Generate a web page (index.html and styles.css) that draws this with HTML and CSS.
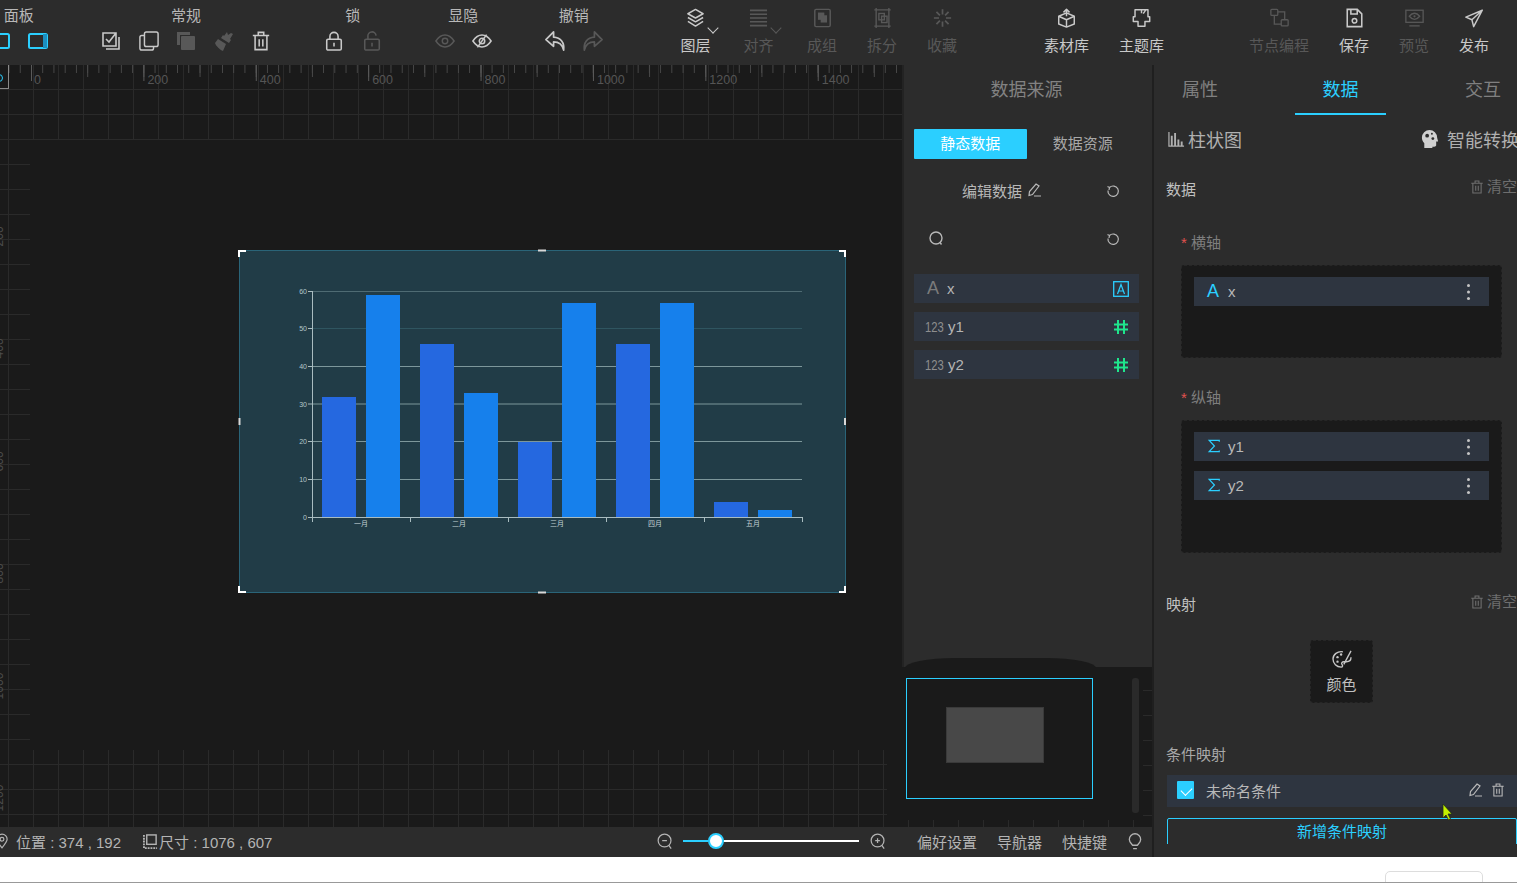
FILE: index.html
```html
<!DOCTYPE html>
<html lang="zh-CN">
<head>
<meta charset="utf-8">
<title>数据大屏编辑器</title>
<link rel="stylesheet" href="styles.css">
</head>
<body>
<svg class="sprite" xmlns="http://www.w3.org/2000/svg">
  <symbol id="i-panel-r" viewBox="0 0 20 16"><rect x="1" y="1" width="18" height="14" rx="1.5" fill="none" stroke="currentColor" stroke-width="2"/><rect x="15" y="1" width="4" height="14" fill="#1c8fc0"/></symbol>
  <symbol id="i-panel-l" viewBox="0 0 20 16"><rect x="1" y="1" width="18" height="14" rx="1.5" fill="none" stroke="currentColor" stroke-width="2"/></symbol>
  <symbol id="i-check" viewBox="0 0 20 20"><path d="M2 2h13v13H2zM5 8l3 3 7-9M18 6v12H5" fill="none" stroke="currentColor" stroke-width="1.6"/></symbol>
  <symbol id="i-copy" viewBox="0 0 22 22"><rect x="6" y="1" width="15" height="16" rx="2" fill="none" stroke="currentColor" stroke-width="1.6"/><path d="M6 5H3a2 2 0 0 0-2 2v12a2 2 0 0 0 2 2h11a2 2 0 0 0 2-2v-2" fill="none" stroke="currentColor" stroke-width="1.6"/></symbol>
  <symbol id="i-group" viewBox="0 0 20 20"><path d="M1 1h13v3H4v10H1z" fill="currentColor"/><rect x="5" y="5" width="14" height="14" rx="1" fill="currentColor"/></symbol>
  <symbol id="i-brush" viewBox="0 0 20 20"><path d="M13 1l1 3 3-2 2 1-3 5 1 1-2 3-8-5 2-3 1 1zM4 8l8 5-3 7c-3-1-7-5-8-8z" fill="currentColor"/></symbol>
  <symbol id="i-trash" viewBox="0 0 20 22"><path d="M1 5h18M7 5V1.5h6V5M3.5 5v15.5h13V5M8 9v8M12 9v8" fill="none" stroke="currentColor" stroke-width="1.7"/></symbol>
  <symbol id="i-lock" viewBox="0 0 20 22"><rect x="2" y="9" width="16" height="12" rx="1.5" fill="none" stroke="currentColor" stroke-width="1.7"/><path d="M5.500 9V6a4.500 4.500 0 0 1 9 0v3M10 13v4" fill="none" stroke="currentColor" stroke-width="1.7"/></symbol>
  <symbol id="i-unlock" viewBox="0 0 20 22"><rect x="2" y="9" width="16" height="12" rx="1.5" fill="none" stroke="currentColor" stroke-width="1.7"/><path d="M5.500 9V6a4.500 4.500 0 0 1 9-1M10 13v4" fill="none" stroke="currentColor" stroke-width="1.7"/></symbol>
  <symbol id="i-eye" viewBox="0 0 22 16"><path d="M1 8c3-4.500 6-6.500 10-6.500S18 3.500 21 8c-3 4.500-6 6.500-10 6.500S4 12.500 1 8z" fill="none" stroke="currentColor" stroke-width="1.6"/><circle cx="11" cy="8" r="3" fill="none" stroke="currentColor" stroke-width="1.6"/></symbol>
  <symbol id="i-eyeoff" viewBox="0 0 22 16"><path d="M1 8c3-4.500 6-6.500 10-6.500S18 3.500 21 8c-3 4.500-6 6.500-10 6.500S4 12.500 1 8z" fill="none" stroke="currentColor" stroke-width="1.7"/><circle cx="11" cy="8" r="3" fill="none" stroke="currentColor" stroke-width="1.7"/><path d="M16 1L6 15" stroke="currentColor" stroke-width="1.7"/></symbol>
  <symbol id="i-undo" viewBox="0 0 24 24"><path d="M10 2L2 10l8 7v-4.500c5 0 9 2 10.500 8.500 1-8-3-13-10.500-13.500z" fill="none" stroke="currentColor" stroke-width="1.8" stroke-linejoin="round"/></symbol>
  <symbol id="i-redo" viewBox="0 0 24 24"><path d="M14 2l8 8-8 7v-4.500c-5 0-9 2-10.500 8.500-1-8 3-13 10.500-13.500z" fill="none" stroke="currentColor" stroke-width="1.8" stroke-linejoin="round"/></symbol>
  <symbol id="i-layers" viewBox="0 0 20 20"><path d="M10 1l8 4.500-8 4.500-8-4.500zM2 9.500l8 4.500 8-4.500M2 13.500l8 5 8-5" fill="none" stroke="currentColor" stroke-width="1.6" stroke-linejoin="round"/></symbol>
  <symbol id="i-align" viewBox="0 0 20 20"><path d="M1 2h18M1 6h18M1 10h18M1 14h18M1 18h18" stroke="currentColor" stroke-width="1.7"/></symbol>
  <symbol id="i-combine" viewBox="0 0 20 22"><rect x="1.500" y="1.500" width="17" height="19" rx="1.500" fill="none" stroke="currentColor" stroke-width="1.600"/><rect x="5" y="5" width="7" height="8" fill="currentColor"/><rect x="8" y="8" width="7" height="8" fill="currentColor"/></symbol>
  <symbol id="i-split" viewBox="0 0 20 22"><path d="M1 2h18M1 20h18M3 0v22M17 0v22" stroke="currentColor" stroke-width="1.500"/><rect x="6" y="6" width="6" height="7" fill="none" stroke="currentColor" stroke-width="1.500"/><rect x="9" y="9" width="6" height="7" fill="none" stroke="currentColor" stroke-width="1.500"/></symbol>
  <symbol id="i-spin" viewBox="0 0 22 22"><path d="M11 1v6M11 15v6M1 11h6M15 11h6M4 4l4 4M14 14l4 4M18 4l-4 4M8 14l-4 4" stroke="currentColor" stroke-width="2"/></symbol>
  <symbol id="i-box" viewBox="0 0 22 22"><path d="M2 9l9-4 9 4v9l-9 3.500L2 18zM2 9l9 4 9-4M11 13v8.500M11 9V1.500M7.500 4.500L11 1l3.500 3.500" fill="none" stroke="currentColor" stroke-width="1.700" stroke-linejoin="round"/></symbol>
  <symbol id="i-theme" viewBox="0 0 22 22"><path d="M3.500 1.500h15v8h2v5.500H15v5.500H7V15H1.500V9.500h2zM11 1.500v4M16 1.500L13 6" fill="none" stroke="currentColor" stroke-width="1.700" stroke-linejoin="round"/></symbol>
  <symbol id="i-node" viewBox="0 0 22 22"><rect x="1" y="1" width="8" height="7" rx="1" fill="none" stroke="currentColor" stroke-width="1.500"/><rect x="13" y="13" width="8" height="7" rx="1" fill="none" stroke="currentColor" stroke-width="1.500"/><path d="M9 4h8v9M5 8v10h8" fill="none" stroke="currentColor" stroke-width="1.500"/></symbol>
  <symbol id="i-save" viewBox="0 0 20 22"><path d="M2 1.500h11l5 5v14H2zM6 1.500v5h7v-5" fill="none" stroke="currentColor" stroke-width="1.700"/><circle cx="10" cy="14" r="2.500" fill="none" stroke="currentColor" stroke-width="1.700"/></symbol>
  <symbol id="i-preview" viewBox="0 0 22 22"><rect x="1" y="2" width="20" height="14" fill="none" stroke="currentColor" stroke-width="1.500"/><path d="M5 20h12M5 9c2-2.500 4-3.500 6-3.500S15 6.500 17 9c-2 2.500-4 3.500-6 3.500S7 11.500 5 9z" fill="none" stroke="currentColor" stroke-width="1.500"/><circle cx="11" cy="9" r="1.300" fill="currentColor"/></symbol>
  <symbol id="i-send" viewBox="0 0 22 22"><path d="M20 2L1 10l7 3 2 8zM20 2L8 13" fill="none" stroke="currentColor" stroke-width="1.700" stroke-linejoin="round"/></symbol>
  <symbol id="i-pencil" viewBox="0 0 14 14"><path d="M9 1l3 2-6.500 8.500L2 12.500l.5-4zM7 13h7" fill="none" stroke="currentColor" stroke-width="1.200"/></symbol>
  <symbol id="i-refresh" viewBox="0 0 14 14"><path d="M3.500 2.500a5.200 5.200 0 1 1-1.500 3M1.500 1.500l2 1-.5 2.500" fill="none" stroke="currentColor" stroke-width="1.200"/></symbol>
  <symbol id="i-search" viewBox="0 0 16 16"><circle cx="8" cy="8" r="6" fill="none" stroke="currentColor" stroke-width="1.400"/><path d="M12 12.500l1.500 2" stroke="currentColor" stroke-width="1.400"/></symbol>
  <symbol id="i-hash" viewBox="0 0 16 16"><path d="M5 1v14M11 1v14M1 5.500h14M1 10.500h14" stroke="currentColor" stroke-width="2"/></symbol>
  <symbol id="i-abox" viewBox="0 0 16 16"><rect x=".7" y=".7" width="14.600" height="14.600" fill="none" stroke="currentColor" stroke-width="1.300"/><path d="M4.500 13L8 3.500l3.500 9.500M5.500 10h5" fill="none" stroke="currentColor" stroke-width="1.200"/></symbol>
  <symbol id="i-sigma" viewBox="0 0 14 16"><path d="M13 3V1.500H1.500L7.500 8l-6 6.500H13V13" fill="none" stroke="currentColor" stroke-width="1.400"/></symbol>
  <symbol id="i-bars" viewBox="0 0 18 16"><path d="M1 0v15h16" fill="none" stroke="currentColor" stroke-width="1.300"/><path d="M4 4v11M7.500 1v14M11 8v7M14.500 10v5" stroke="currentColor" stroke-width="2"/></symbol>
  <symbol id="i-brain" viewBox="0 0 18 20"><path d="M3 19v-5C1 12 .5 10 .5 8a8 8 0 0 1 16 0c0 1 1 3 1 4h-2v4c0 1-1 1.500-2 1.500h-2V19z" fill="currentColor"/><circle cx="6" cy="6" r="2" fill="#2c2c2c"/><circle cx="12" cy="9" r="1.500" fill="#2c2c2c"/><circle cx="11" cy="4" r="1" fill="#2c2c2c"/></symbol>
  <symbol id="i-palette" viewBox="0 0 22 20"><path d="M12 2C6 1 1 5 1 10c0 5 4 9 9 9 2 0 2-2 1-3s0-3 2-3h3c3 0 5-2 5-5" fill="none" stroke="currentColor" stroke-width="1.500"/><path d="M21 1l-8 15" stroke="currentColor" stroke-width="1.500"/><circle cx="6" cy="8" r="1.300" fill="currentColor"/><circle cx="10" cy="5" r="1.300" fill="currentColor"/><circle cx="6" cy="13" r="1.300" fill="currentColor"/></symbol>
  <symbol id="i-pin" viewBox="0 0 14 18"><path d="M7 17C3 12 1 9 1 7a6 6 0 0 1 12 0c0 2-2 5-6 10z" fill="none" stroke="currentColor" stroke-width="1.400"/><circle cx="7" cy="7" r="2.200" fill="none" stroke="currentColor" stroke-width="1.400"/></symbol>
  <symbol id="i-size" viewBox="0 0 16 16"><path d="M1 1v14h14" fill="none" stroke="currentColor" stroke-width="2" stroke-dasharray="2 1"/><rect x="4" y="1" width="10" height="10" fill="none" stroke="currentColor" stroke-width="1.500"/></symbol>
  <symbol id="i-zoomout" viewBox="0 0 18 18"><circle cx="8" cy="8" r="6.800" fill="none" stroke="currentColor" stroke-width="1.300"/><path d="M5.500 8h5M12.500 13l2.500 3.500" fill="none" stroke="currentColor" stroke-width="1.300"/></symbol>
  <symbol id="i-zoomin" viewBox="0 0 18 18"><circle cx="8" cy="8" r="6.800" fill="none" stroke="currentColor" stroke-width="1.300"/><path d="M5.500 8h5M8 5.500v5M12.500 13l2.500 3.500" fill="none" stroke="currentColor" stroke-width="1.300"/></symbol>
  <symbol id="i-bulb" viewBox="0 0 14 18"><path d="M4.500 13C3 11 1 9.500 1 6.800a6 6 0 0 1 12 0c0 2.700-2 4.200-3.500 6.200zM5 16.500h4" fill="none" stroke="currentColor" stroke-width="1.400"/></symbol>
</svg>

<div class="app">
  <header class="topbar">
    <div class="group group-first">
      <div class="group-label">面板</div>
      <div class="group-icons">
        <svg class="ic-panel cyan"><use href="#i-panel-l"/></svg>
        <svg class="ic-panel cyan"><use href="#i-panel-r"/></svg>
      </div>
    </div>
    <div class="group">
      <div class="group-label">常规</div>
      <div class="group-icons">
        <svg class="ic on"><use href="#i-check"/></svg>
        <svg class="ic on"><use href="#i-copy"/></svg>
        <svg class="ic off"><use href="#i-group"/></svg>
        <svg class="ic off"><use href="#i-brush"/></svg>
        <svg class="ic on"><use href="#i-trash"/></svg>
      </div>
    </div>
    <div class="group">
      <div class="group-label">锁</div>
      <div class="group-icons">
        <svg class="ic on"><use href="#i-lock"/></svg>
        <svg class="ic off"><use href="#i-unlock"/></svg>
      </div>
    </div>
    <div class="group">
      <div class="group-label">显隐</div>
      <div class="group-icons">
        <svg class="ic off"><use href="#i-eye"/></svg>
        <svg class="ic on"><use href="#i-eyeoff"/></svg>
      </div>
    </div>
    <div class="group">
      <div class="group-label">撤销</div>
      <div class="group-icons">
        <svg class="ic on wide"><use href="#i-undo"/></svg>
        <svg class="ic off wide"><use href="#i-redo"/></svg>
      </div>
    </div>

    <div class="tools tools-a">
      <div class="tool w63 on"><svg class="tool-ic"><use href="#i-layers"/></svg><span class="caret"></span><span>图层</span></div>
      <div class="tool w63 off"><svg class="tool-ic"><use href="#i-align"/></svg><span class="caret"></span><span>对齐</span></div>
      <div class="tool w60 shift off"><svg class="tool-ic"><use href="#i-combine"/></svg><span>成组</span></div>
      <div class="tool w60 off"><svg class="tool-ic"><use href="#i-split"/></svg><span>拆分</span></div>
      <div class="tool w60 off"><svg class="tool-ic"><use href="#i-spin"/></svg><span>收藏</span></div>
    </div>
    <div class="tools tools-b">
      <div class="tool w75 on"><svg class="tool-ic"><use href="#i-box"/></svg><span>素材库</span></div>
      <div class="tool w75 on"><svg class="tool-ic"><use href="#i-theme"/></svg><span>主题库</span></div>
    </div>
    <div class="tools tools-c">
      <div class="tool w90 off"><svg class="tool-ic"><use href="#i-node"/></svg><span>节点编程</span></div>
      <div class="tool w60 on"><svg class="tool-ic"><use href="#i-save"/></svg><span>保存</span></div>
      <div class="tool w60 off"><svg class="tool-ic"><use href="#i-preview"/></svg><span>预览</span></div>
      <div class="tool w60 on"><svg class="tool-ic"><use href="#i-send"/></svg><span>发布</span></div>
    </div>
  </header>

  <div class="workspace">
    <div class="left-col">
      <div class="upper">
        <section class="canvas">
          <div class="ruler-top">
            <span>0</span><span>200</span><span>400</span><span>600</span><span>800</span><span>1000</span><span>1200</span><span>1400</span>
          </div>
          <div class="ruler-left">
            <span>200</span><span>400</span><span>600</span><span>800</span><span>1000</span><span>1200</span>
          </div>
          <div class="ruler-corner"><span class="corner-ring"></span></div>
          <div class="canvas-end"></div>
          <div class="stage">
            <div class="widget">
              <svg class="chart" viewBox="0 0 607 343" xmlns="http://www.w3.org/2000/svg">
                <g stroke-width="1">
                  <path d="M73 41.500H563" stroke="#4f6b73"/>
                  <path d="M73 78.500H563" stroke="#2f5560"/>
                  <path d="M73 116.500H563M73 154H563M73 191.500H563M73 229.500H563" stroke="#7d979b"/>
                </g>
                <g fill="#2568e0">
                  <rect x="83" y="147" width="34" height="120"/>
                  <rect x="181" y="94" width="34" height="173"/>
                  <rect x="279" y="192" width="34" height="75"/>
                  <rect x="377" y="94" width="34" height="173"/>
                  <rect x="475" y="252" width="34" height="15"/>
                </g>
                <g fill="#1680ec">
                  <rect x="127" y="45" width="34" height="222"/>
                  <rect x="225" y="143" width="34" height="124"/>
                  <rect x="323" y="53" width="34" height="214"/>
                  <rect x="421" y="53" width="34" height="214"/>
                  <rect x="519" y="260" width="34" height="7"/>
                </g>
                <path d="M73.500 41V267.500H563M73.500 267v5M171.500 267v5M269.500 267v5M367.500 267v5M465.500 267v5M563.500 267v5M69 41.500h4M69 78.500h4M69 116.500h4M69 154h4M69 191.500h4M69 229.500h4M69 267.500h4" fill="none" stroke="#a9bcc0" stroke-width="1"/>
                <g class="chart-y">
                  <text x="68" y="43.500">60</text><text x="68" y="81">50</text><text x="68" y="118.500">40</text><text x="68" y="156.500">30</text><text x="68" y="194">20</text><text x="68" y="231.500">10</text><text x="68" y="269.500">0</text>
                </g>
                <g class="chart-x">
                  <text x="122" y="276">一月</text><text x="220" y="276">二月</text><text x="318" y="276">三月</text><text x="416" y="276">四月</text><text x="514" y="276">五月</text>
                </g>
                <path d="M0 7V1H7M600 1h6V7M0 336v6h7M606 336v6h-6" fill="none" stroke="#fff" stroke-width="2"/>
                <path d="M299 .5h8M299 342.500h8" stroke="#d8d8d8" stroke-width="2"/>
                <path d="M.5 168v7M606 168v7" stroke="#d8d8d8" stroke-width="2"/>
              </svg>
            </div>
          </div>
        </section>
        <div class="side-col">
          <section class="data-panel">
            <div class="panel-title">数据来源</div>
            <div class="source-tabs">
              <div class="source-tab active">静态数据</div>
              <div class="source-tab">数据资源</div>
            </div>
            <div class="edit-row">
              <span>编辑数据</span><svg class="i14"><use href="#i-pencil"/></svg>
              <svg class="i14 push"><use href="#i-refresh"/></svg>
            </div>
            <div class="search-row">
              <svg class="i16"><use href="#i-search"/></svg>
              <svg class="i14 push"><use href="#i-refresh"/></svg>
            </div>
            <div class="field-list">
              <div class="field"><span class="type-a">A</span><span class="field-name x">x</span><svg class="i16 push cyan"><use href="#i-abox"/></svg></div>
              <div class="field"><span class="type-n">123</span><span class="field-name">y1</span><svg class="i16 push green"><use href="#i-hash"/></svg></div>
              <div class="field"><span class="type-n">123</span><span class="field-name">y2</span><svg class="i16 push green"><use href="#i-hash"/></svg></div>
            </div>
          </section>
          <section class="minimap">
            <div class="mini-view"><div class="mini-content"></div></div>
            <div class="mini-scroll"></div>
          </section>
        </div>
      </div>
      <footer class="statusbar">
        <svg class="pin"><use href="#i-pin"/></svg>
        <span class="st-pos">位置 : 374 , 192</span>
        <svg class="st-size-ic"><use href="#i-size"/></svg>
        <span>尺寸 : 1076 , 607</span>
        <svg class="zoom-ic zoom-out"><use href="#i-zoomout"/></svg>
        <div class="slider"><span class="slider-fill"></span><span class="slider-thumb"></span><span class="slider-rest"></span></div>
        <svg class="zoom-ic"><use href="#i-zoomin"/></svg>
        <span class="st-link first">偏好设置</span>
        <span class="st-link">导航器</span>
        <span class="st-link">快捷键</span>
        <svg class="bulb"><use href="#i-bulb"/></svg>
      </footer>
    </div>

    <aside class="props">
      <nav class="prop-tabs">
        <div class="prop-tab">属性</div>
        <div class="prop-tab active">数据</div>
        <div class="prop-tab">交互</div>
      </nav>
      <div class="prop-body">
        <div class="chart-head">
          <svg class="i17"><use href="#i-bars"/></svg><span>柱状图</span>
          <svg class="i17 brain"><use href="#i-brain"/></svg><span class="smart">智能转换</span>
        </div>
        <div class="sec-row sec-data"><span>数据</span><span class="clear"><svg class="i14"><use href="#i-trash"/></svg>清空</span></div>
        <div class="axis-label axis-x"><b>*</b> 横轴</div>
        <div class="drop drop-x">
          <div class="pill"><span class="type-a">A</span><span class="pill-name">x</span><span class="dots"></span></div>
        </div>
        <div class="axis-label axis-y"><b>*</b> 纵轴</div>
        <div class="drop drop-y">
          <div class="pill"><svg class="i14 sigma cyan"><use href="#i-sigma"/></svg><span class="pill-name">y1</span><span class="dots"></span></div>
          <div class="pill"><svg class="i14 sigma cyan"><use href="#i-sigma"/></svg><span class="pill-name">y2</span><span class="dots"></span></div>
        </div>
        <div class="sec-row sec-map"><span>映射</span><span class="clear"><svg class="i14"><use href="#i-trash"/></svg>清空</span></div>
        <div class="color-box"><svg class="palette"><use href="#i-palette"/></svg><span>颜色</span></div>
        <div class="sec-row sec-cond"><span>条件映射</span></div>
        <div class="cond-item">
          <span class="checkbox"></span><span class="cond-name">未命名条件</span>
          <svg class="i14 push"><use href="#i-pencil"/></svg>
          <svg class="i14 cond-trash"><use href="#i-trash"/></svg>
        </div>
        <div class="add-cond">新增条件映射</div>
      </div>
      <svg class="pointer" viewBox="0 0 10 18" xmlns="http://www.w3.org/2000/svg"><path d="M1 1v14l3-3 2.500 5 2-1-2.500-5h4z" fill="#c4f000" stroke="#23301a" stroke-width=".8"/></svg>
    </aside>
  </div>
  <div class="page-foot"><div class="foot-box"></div></div>
</div>
</body>
</html>
```

FILE: styles.css
```css
* { box-sizing: border-box; }
html, body { margin: 0; height: 100%; }
body {
  background: #fff;
  font-family: "Liberation Sans", "Noto Sans CJK SC", sans-serif;
  font-size: 15px;
  color: #c4c4c4;
  overflow: hidden;
}
.sprite { position: absolute; width: 0; height: 0; }
.app { width: 1517px; height: 883px; display: flex; flex-direction: column; overflow: hidden; }

/* top bar */
.topbar {
  height: 65px;
  flex: none;
  background: #2c2c2c;
  display: flex;
  gap: 53px;
  overflow: hidden;
}
.group { display: flex; flex-direction: column; align-items: center; flex: none; }
.group-first { margin-left: -10px; }
.group-first + .group { margin-left: .5px; }
.group-label { height: 32px; line-height: 32px; font-size: 15px; color: #b8b8b8; }
.group-icons { display: flex; gap: 17.500px; align-items: center; height: 20px; margin-top: -1px; }
.ic { width: 20px; height: 20px; flex: none; }
.ic.wide { width: 23px; height: 23px; margin: 0 -1.500px; }
.ic-panel { width: 20px; height: 16px; flex: none; }
.cyan { color: #2bcfff; }
.green { color: #1fe58c; }
.on { color: #c9c9c9; }
.off { color: #585858; }

.tools { display: flex; flex: none; height: 65px; }
.tools-a { margin-left: 8.500px; }
.tools-b { margin-left: 4px; }
.tools-c { margin-left: 2px; }
.tool {
  position: relative;
  display: flex; flex-direction: column; align-items: center;
  font-size: 15px;
  padding-top: 8px;
  flex: none;
}
.tool span:last-child { margin-top: 7px; line-height: 22px; }
.w60 { width: 60px; }
.w63 { width: 63px; }
.w75 { width: 75px; }
.w90 { width: 90px; }
.shift { margin-left: 2px; }
.tool-ic { width: 19px; height: 20px; flex: none; }
.caret {
  position: absolute; left: 45px; top: 24px;
  width: 8px; height: 8px;
  border-right: 1.200px solid currentColor; border-bottom: 1.200px solid currentColor;
  transform: rotate(45deg);
}

/* layout */
.workspace { flex: none; height: 792px; display: flex; }
.left-col { width: 1152px; flex: none; display: flex; flex-direction: column; }
.upper { flex: 1; display: flex; min-height: 0; }

/* canvas */
.canvas {
  position: relative;
  width: 902px; flex: none;
  background-color: #1a1a1a;
  background-image:
    linear-gradient(to right, #2a2a2a 1px, transparent 1px),
    linear-gradient(to bottom, #2a2a2a 1px, transparent 1px);
  background-size: 25px 25px;
  background-position: 8px 24px;
  padding: 75px 0 77px 30px;
  display: flex;
  overflow: hidden;
}
.stage { position: relative; flex: 1; background: #1a1a1a; }
.canvas-end { position: absolute; right: 0; bottom: 0; width: 15px; height: 77px; background: #1a1a1a; }
.ruler-top {
  position: absolute; left: 0; right: 0; top: 0; height: 24px;
  display: flex;
  padding-left: 31px;
  font-size: 12.500px; color: #555;
  background-image:
    linear-gradient(to right, #5a5a5a 1px, transparent 1px),
    linear-gradient(to right, #484848 1px, transparent 1px),
    linear-gradient(to right, #484848 1px, transparent 1px);
  background-size: 112.400px 16px, 56.200px 12px, 11.240px 8px;
  background-position: 31px 0, 31px 0, 31px 0;
  background-repeat: repeat-x;
}
.ruler-top span { width: 112.400px; flex: none; padding: 8px 0 0 4px; line-height: 14px; }
.ruler-top span:first-child { padding-left: 3px; }
.ruler-left {
  position: absolute; left: 0; top: 115px; bottom: 0; width: 8px;
  display: flex; flex-direction: column; overflow: hidden;
  font-size: 12px; color: #4c4c4c;
}
.ruler-left span {
  height: 112.400px; flex: none;
  writing-mode: vertical-rl; transform: rotate(180deg);
  margin-left: -8px; width: 14px;
  text-align: center; line-height: 14px;
}
.ruler-corner {
  position: absolute; left: 0; top: 0; width: 9px; height: 24px;
  border-right: 1px solid #8a8a8a; border-bottom: 1px solid #8a8a8a;
  background: #1a1a1a; overflow: hidden;
}
.corner-ring {
  position: absolute; left: -5px; top: 9px; width: 8px; height: 8px;
  border: 1.500px solid #2bcfff; border-radius: 50%;
}
.widget {
  position: absolute; left: 209px; top: 110px;
  width: 607px; height: 343px;
  background: #213c47;
  border: 1px solid #2a6478;
}
.chart { position: absolute; left: -1px; top: -1px; width: 607px; height: 343px; overflow: visible; }
.chart-y text { font-size: 7px; fill: #b4c6ca; text-anchor: end; }
.chart-x text { font-size: 7px; fill: #c4d2d5; text-anchor: middle; }

/* data panel */
.side-col { width: 250px; flex: none; display: flex; flex-direction: column; }
.data-panel {
  height: 602px; flex: none;
  background: #2c2c2c;
  border-left: 2px solid #232323;
  padding: 0 13px 0 10px;
}
.panel-title { height: 48px; line-height: 50px; text-align: center; font-size: 18px; color: #828282; }
.source-tabs { display: flex; margin-top: 16px; height: 30px; }
.source-tab { width: 113px; text-align: center; line-height: 30px; font-size: 15px; color: #a8a8a8; }
.source-tab.active { background: #2bcfff; color: #fff; border-radius: 1px; }
.edit-row, .search-row { display: flex; align-items: center; height: 22px; color: #b8b8b8; font-size: 15px; padding-right: 19px; }
.edit-row { margin-top: 21px; padding-left: 48px; padding-bottom: 2px; gap: 5px; }
.edit-row .push { margin-top: 4px; }
.search-row { margin-top: 25px; padding-left: 14px; }
.search-row .push { margin-top: 3px; }
.push { margin-left: auto; }
.i14 { width: 14px; height: 14px; flex: none; }
.i16 { width: 16px; height: 16px; flex: none; }
.i17 { width: 17px; height: 17px; flex: none; }
.field-list { margin-top: 25px; display: flex; flex-direction: column; gap: 9.500px; }
.field {
  height: 28.500px; background: #2e3540;
  display: flex; align-items: center;
  padding: 0 10px 0 13px;
  color: #b4b4b4;
}
.field .i16 { margin-top: 2px; }
.type-a { font-size: 18px; color: #7b7b7b; width: 20px; flex: none; line-height: 20px; }
.type-n { font-size: 15px; color: #8e8e8e; transform: scaleX(.75); transform-origin: left; width: 23px; flex: none; margin-left: -2px; }
.field-name { font-size: 15px; }

/* minimap */
.minimap {
  position: relative;
  flex: 1;
  background-color: #1a1a1a;
  background-image:
    linear-gradient(to bottom, #2a2a2a 1px, transparent 1px),
    linear-gradient(to right, #2a2a2a 1px, transparent 1px);
  background-size: 9px 25px, 25px 7px;
  background-position: right 0 top 23px, 6px bottom;
  background-repeat: repeat-y, repeat-x;
  padding: 11px 0 0 4px;
}
.minimap::before {
  content: ""; position: absolute; left: 3px; top: -9px;
  width: 191px; height: 20px;
  background: #1a1a1a; border-radius: 50px 50px 0 0 / 10px 10px 0 0;
}
.mini-view {
  position: relative;
  width: 187px; height: 121px;
  border: 1px solid #2bcfff;
  background: #1a1a1a;
  display: flex; align-items: center;
  padding-left: 39px;
}
.mini-content { width: 98px; height: 56px; background: #484848; border: 1px solid #3a3a3a; margin-top: -7px; }
.mini-scroll {
  position: absolute; left: 230px; top: 11px;
  width: 7px; height: 135px;
  background: #2a2a2a; border-radius: 3px;
}

/* status bar */
.statusbar {
  height: 30px; flex: none;
  background: #2c2c2c;
  display: flex; align-items: center;
  padding-bottom: 2px;
  font-size: 15px; color: #b4b4b4;
}
.pin { width: 12px; height: 16px; margin-left: -4px; flex: none; }
.st-pos { margin-left: 8px; }
.st-size-ic { width: 15px; height: 15px; margin-left: 22px; margin-right: 1px; flex: none; }
.zoom-ic { width: 17px; height: 17px; flex: none; }
.zoom-out { margin-left: auto; }
.slider { width: 176px; margin: 0 11px 0 9px; display: flex; align-items: center; flex: none; }
.slider-fill { width: 25px; height: 2px; background: #2bcfff; }
.slider-thumb { width: 16px; height: 16px; border-radius: 50%; background: #fff; border: 2px solid #2bcfff; flex: none; }
.slider-rest { flex: 1; height: 2px; background: #fff; }
.st-link { margin-left: 20px; }
.st-link.first { margin-left: 30px; }
.bulb { width: 14px; height: 17px; margin-left: 21px; margin-right: 10px; flex: none; }

/* right panel */
.props {
  position: relative;
  flex: 1; min-width: 0;
  background: #2c2c2c;
  border-left: 2px solid #1f1f1f;
  overflow: hidden;
}
.prop-tabs { display: flex; gap: 50px; height: 50px; }
.prop-tab {
  width: 92px; flex: none; text-align: center;
  font-size: 18px; line-height: 50px; color: #808080;
}
.prop-tab.active { width: 91px; margin: 0 1px 0 -1px; color: #2bcfff; border-bottom: 2px solid #2bcfff; }
.prop-body { height: 729px; overflow: hidden; padding-left: 12px; }
.chart-head { display: flex; align-items: center; height: 24px; margin-top: 12px; font-size: 18px; color: #b0b0b0; gap: 3px; padding-left: 2px; white-space: nowrap; }
.brain { margin-left: 176px; color: #d0d0d0; width: 18px; height: 19px; }
.smart { margin-left: 5px; }
.sec-row { display: flex; justify-content: space-between; height: 22px; line-height: 24px; font-size: 15px; color: #c0c0c0; }
.sec-data { margin-top: 27px; }
.sec-map { margin-top: 40px; }
.sec-cond { margin-top: 40px; color: #a8a8a8; }
.clear { display: inline-flex; align-items: center; gap: 3px; color: #6e6e6e; height: 16px; line-height: 16px; margin-top: 1px; white-space: nowrap; }
.axis-label { height: 22px; line-height: 22px; font-size: 15px; color: #7e7e7e; padding-left: 15px; }
.axis-label b { color: #e0524f; font-weight: 400; }
.axis-x { margin-top: 32px; }
.axis-y { margin-top: 29px; }
.drop {
  margin: 11px 15px 0 15px;
  background: #1a1a1a;
  border: 1px dashed #262626;
  border-radius: 3px;
  padding: 11px 12px;
  display: flex; flex-direction: column; gap: 10px;
}
.drop-x { height: 93px; }
.drop-y { height: 133px; }
.pill {
  height: 29px; flex: none; background: #2e3540;
  display: flex; align-items: center;
  padding: 0 0 1px 13px; color: #b8b8b8;
  position: relative;
}
.pill .type-a { width: 21px; color: #2bcfff; }
.pill-name { font-size: 15px; margin-left: 7px; }
.pill .type-a + .pill-name { margin-left: 0; }
.dots {
  position: absolute; right: 19px; top: 7px;
  width: 3px; height: 3px; border-radius: 50%;
  background: #c4c4c4;
  box-shadow: 0 6.500px 0 #c4c4c4, 0 13px 0 #c4c4c4;
}
.color-box {
  width: 63px; height: 63px;
  margin: 25px 0 0 144px;
  background: #1a1a1a;
  border: 1px dashed #262626;
  border-radius: 3px;
  display: flex; flex-direction: column; align-items: center;
  font-size: 15px; color: #c0c0c0;
}
.palette { width: 20px; height: 18px; margin-top: 9px; color: #c8c8c8; }
.color-box span { margin-top: 6px; line-height: 22px; }
.cond-item {
  height: 32px; margin: 10px 0 0 1px;
  background: #2e3540;
  display: flex; align-items: center;
  padding: 0 12px 2px 10px;
  font-size: 15px; color: #b8b8b8;
}
.checkbox {
  position: relative;
  width: 17px; height: 18px; flex: none;
  background: #2bcfff; border-radius: 1px;
}
.checkbox::after {
  content: ""; position: absolute; left: 5.500px; top: 3.500px;
  width: 6px; height: 9px;
  border-right: 1.300px solid #fff; border-bottom: 1.300px solid #fff;
  transform: rotate(45deg);
}
.cond-name { margin-left: 12px; }
.cond-trash { margin-left: 9px; }
.add-cond {
  height: 40px; margin: 11px 0 0 1px;
  border: 1px solid #2bcfff; border-radius: 2px 2px 0 0;
  color: #2bcfff; text-align: center;
  font-size: 15px; line-height: 26px;
}
.pointer { position: absolute; left: 288px; top: 738px; width: 10px; height: 18px; }

.page-foot { flex: 1; background: #fff; border-bottom: 1px solid #999; position: relative; overflow: hidden; }
.foot-box { position: absolute; left: 1385px; top: 14px; width: 98px; height: 30px; border: 1px solid #ddd; border-radius: 5px; }
```
